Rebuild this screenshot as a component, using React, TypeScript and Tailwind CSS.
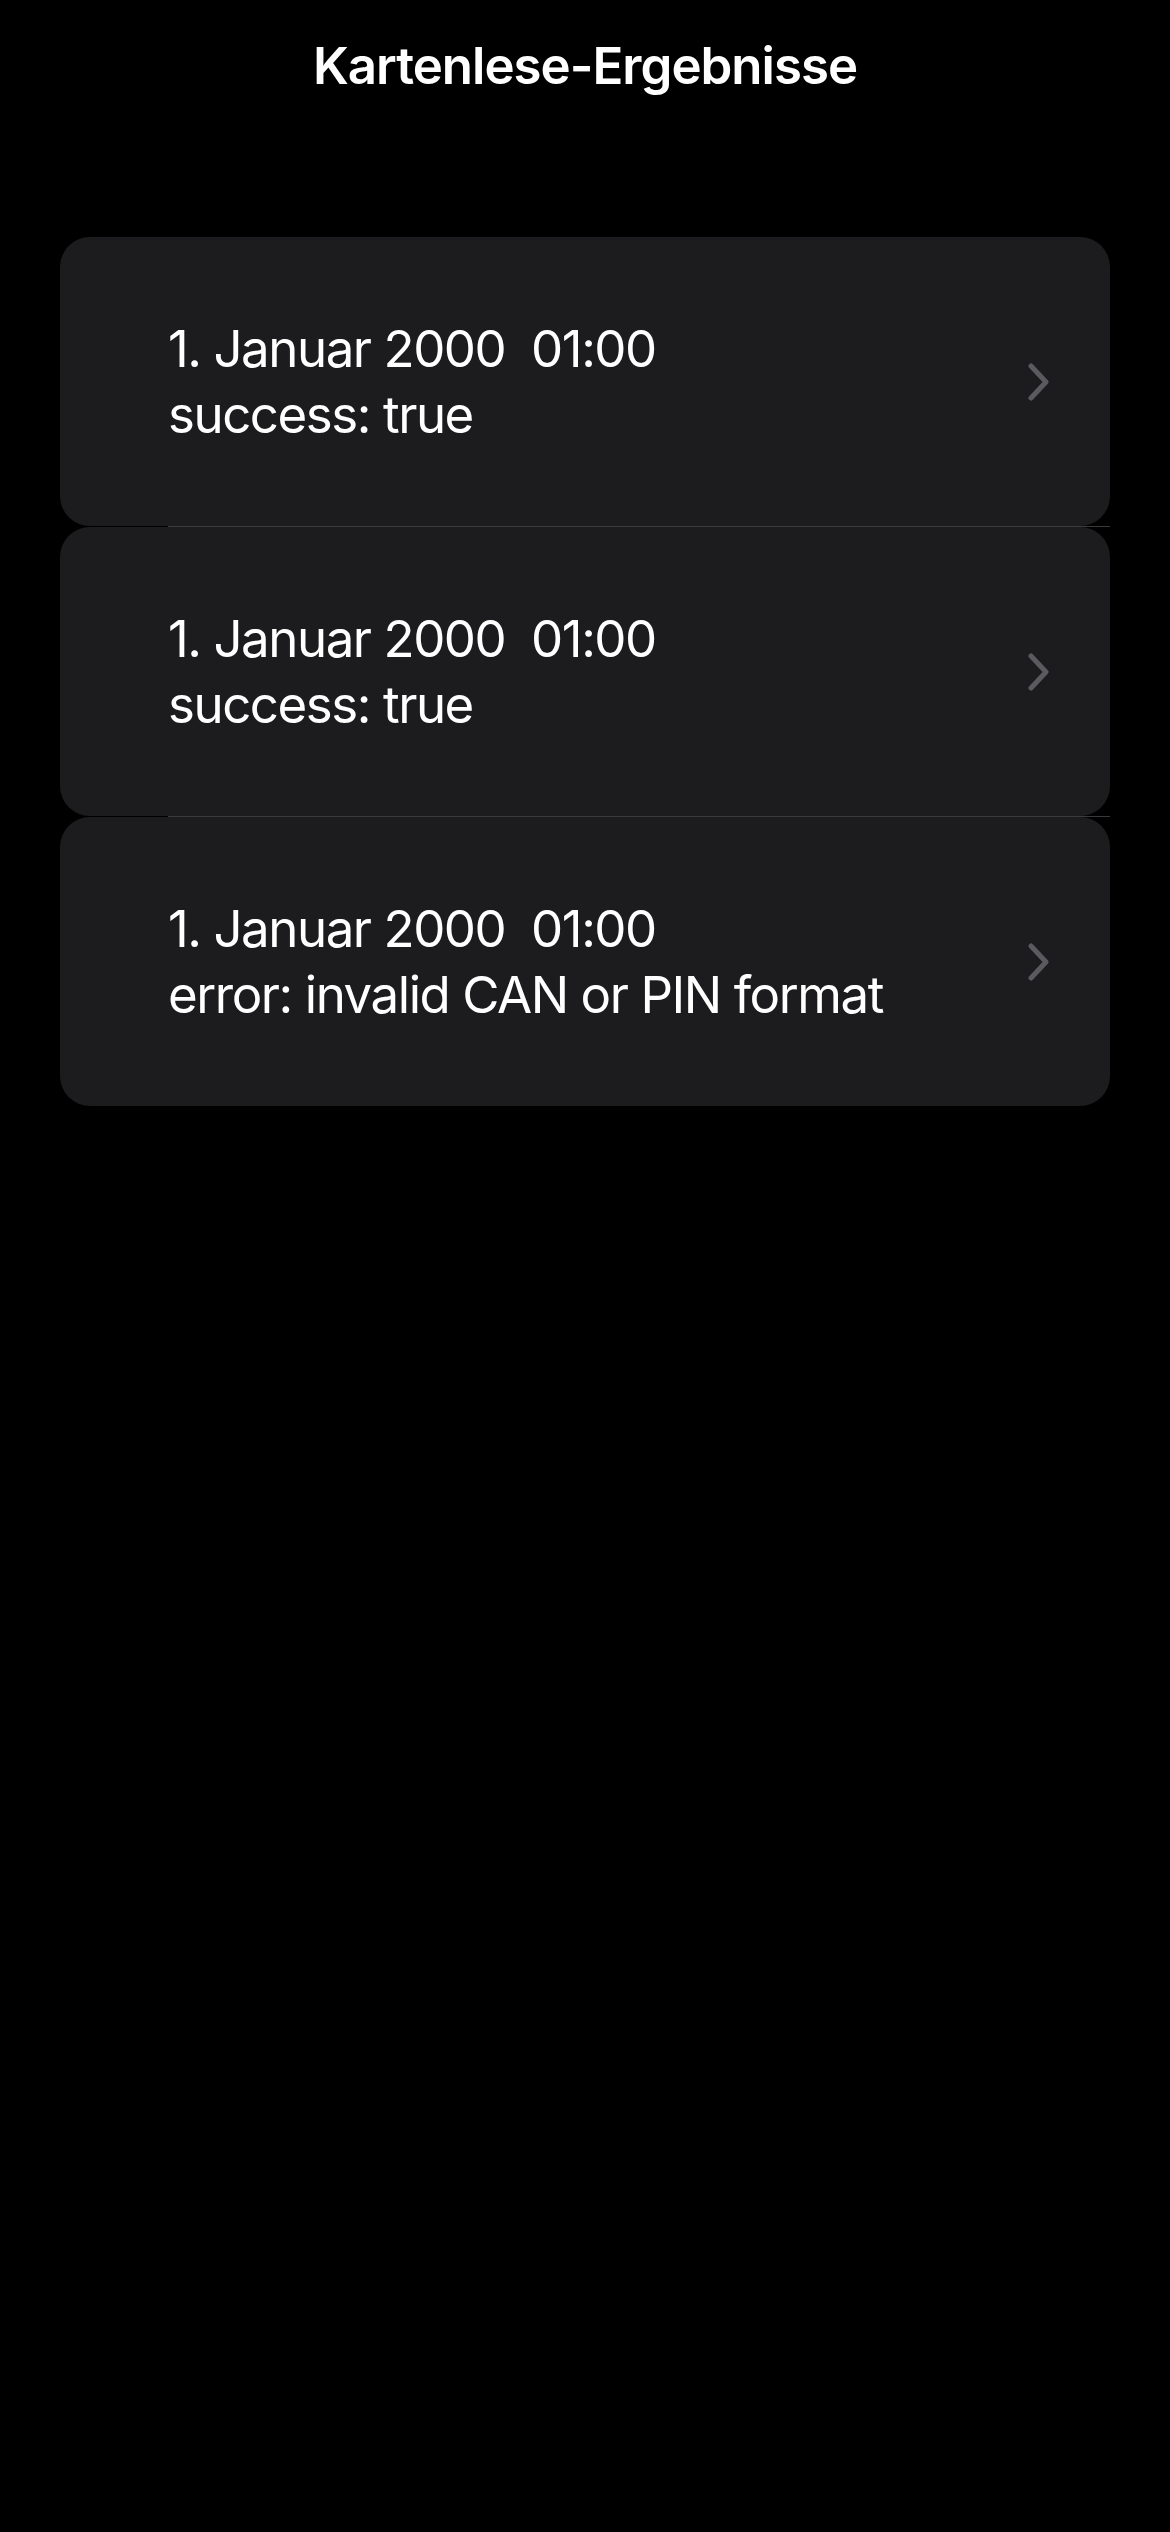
import React from 'react';

interface ReadResult {
  date: string;
  status: string;
}

const results: ReadResult[] = [
  { date: '1. Januar 2000  01:00', status: 'success: true' },
  { date: '1. Januar 2000  01:00', status: 'success: true' },
  { date: '1. Januar 2000  01:00', status: 'error: invalid CAN or PIN format' },
];

function Chevron() {
  return (
    <svg width="22" height="38" viewBox="0 0 22 38" fill="none" className="shrink-0">
      <path
        d="M3 3 L18 19 L3 35"
        stroke="#5b5b5f"
        strokeWidth="5"
        strokeLinecap="round"
        strokeLinejoin="round"
      />
    </svg>
  );
}

function ResultRow({ result }: { result: ReadResult }) {
  return (
    <div className="flex h-[289px] items-center justify-between rounded-[30px] bg-[#1c1c1e] pl-[108px] pr-[60px]">
      <div className="text-[51px] leading-[66px] tracking-[-1.45px] text-white whitespace-pre">
        <div>{result.date}</div>
        <div>{result.status}</div>
      </div>
      <Chevron />
    </div>
  );
}

export default function App() {
  return (
    <div
      className="min-h-screen w-full bg-black"
      style={{ fontFamily: 'Inter, "Noto Sans", sans-serif' }}
    >
      <div className="flex h-[132px] items-center justify-center">
        <h1 className="text-[51px] font-semibold leading-[66px] tracking-[-1px] text-white">
          Kartenlese-Ergebnisse
        </h1>
      </div>
      <div className="px-[60px] pt-[105px]">
        {results.map((r, i) => (
          <div key={i}>
            <ResultRow result={r} />
            {i < results.length - 1 && <div className="ml-[108px] h-px bg-[#3a3a3c]" />}
          </div>
        ))}
      </div>
    </div>
  );
}
